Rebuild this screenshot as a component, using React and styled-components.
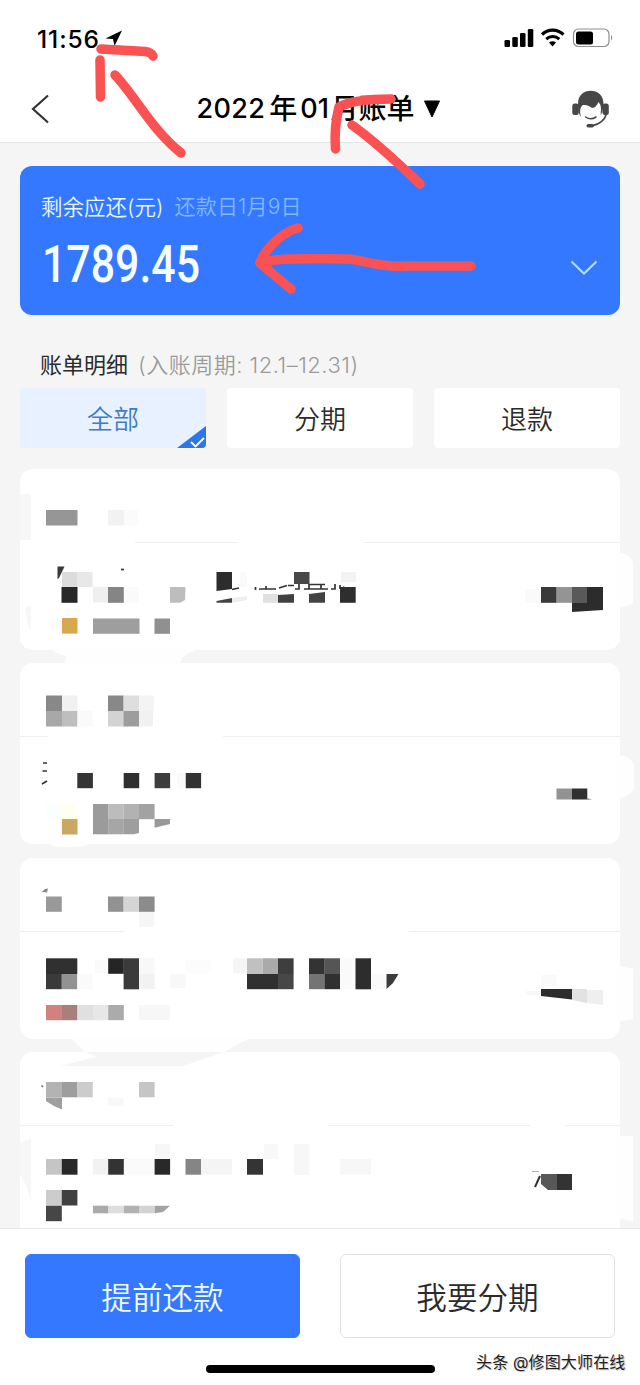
import React from "react";
import styled, { createGlobalStyle } from "styled-components";

const GlobalStyle = createGlobalStyle`
  * {
    box-sizing: border-box;
  }

  body {
    margin: 0;
    background: #f5f5f5;
    font-family: Inter, "Noto Sans CJK SC", sans-serif;
    color: #2b2b2b;
  }
`;

const Page = styled.div`
  position: relative;
  width: 640px;
  height: 1385px;
  overflow: hidden;
  display: flex;
  flex-direction: column;
  background: #f5f5f5;
`;

const Header = styled.header`
  flex: none;
  height: 143px;
  background: #fff;
  border-bottom: 1px solid #e4e4e4;
`;

const StatusBar = styled.div`
  display: flex;
  align-items: center;
  height: 76px;
  padding: 0 27px 0 37px;
`;

const Time = styled.span`
  font-size: 24.5px;
  font-weight: 500;
  letter-spacing: 0.9px;
  color: #000;
  margin: 1px 5px 0 0;
`;

const StatusIcons = styled.div`
  display: flex;
  align-items: center;
  margin-left: auto;
`;

const NavBar = styled.div`
  display: flex;
  align-items: center;
  justify-content: space-between;
  height: 66px;
  padding: 0 31px 0 30px;
`;

const Title = styled.h1`
  display: flex;
  align-items: center;
  margin: 0 0 0 17px;
  font-size: 28px;
  line-height: 36px;
  font-weight: 500;
  color: #000;
  white-space: pre;
`;

const TitleNumber = styled.span`
  font-size: 27px;
  letter-spacing: 0.3px;
  margin: ${props => props.$margin || "0"};
`;

const TitleArrow = styled.svg`
  margin-left: 9px;
`;

const Summary = styled.section`
  flex: none;
  display: flex;
  justify-content: space-between;
  height: 149px;
  margin: 23px 20px 0;
  padding: 24px 22px 0 21px;
  border-radius: 12px;
  background: #3478ff;
`;

const SummaryLabel = styled.div`
  display: flex;
  font-size: 21.5px;
  line-height: 34px;
  font-weight: 350;
  color: #e9f8ff;
`;

const DueDate = styled.span`
  margin-left: 11px;
  font-size: 21px;
  letter-spacing: 0.2px;
  color: #83b9ff;
`;

const Amount = styled.div`
  margin: 11px 0 0 1px;
  font-family: Roboto, sans-serif;
  font-size: 51px;
  line-height: 60px;
  font-weight: 500;
  color: #f4fdff;
  transform: scaleX(0.84);
  transform-origin: left;
`;

const SummaryChevron = styled.svg`
  margin-top: 70px;
`;

const SectionTitle = styled.div`
  flex: none;
  display: flex;
  align-items: center;
  height: 72px;
  padding: 27px 0 0 40px;
  font-size: 22px;
  line-height: 44px;
`;

const Period = styled.span`
  margin-left: 10px;
  font-size: 22px;
  font-weight: 350;
  letter-spacing: 0.5px;
  color: #9b9b9b;
  white-space: pre;
`;

const Tabs = styled.div`
  flex: none;
  display: grid;
  grid-template-columns: repeat(3, 186px);
  justify-content: space-between;
  margin: 1px 20px 0;
`;

const Tab = styled.button`
  position: relative;
  height: 60px;
  padding: 0 0 2px;
  border: 0;
  border-radius: 4px;
  background: ${props => (props.$active ? "#e7f1ff" : "#fff")};
  color: ${props => (props.$active ? "#3f7cc4" : "#2b2b2b")};
  font-family: inherit;
  font-size: 26px;
  font-weight: 350;
`;

const TabCheck = styled.svg`
  position: absolute;
  right: 0;
  bottom: 0;
`;

const BillList = styled.main`
  position: relative;
  flex: none;
  display: flex;
  flex-direction: column;
  gap: 13.4px;
  height: 780px;
  padding: 21px 20px 0;
  overflow: hidden;
`;

const BillCard = styled.article`
  flex: none;
  height: 181px;
  border-radius: 13px;
  background: #fff;

  &:nth-child(4) {
    height: 200px;
  }
`;

const BillHead = styled.div`
  height: 74px;
  border-bottom: 1px solid #f0f0f0;
`;

const Mosaic = styled.svg`
  position: absolute;
  left: 0;
  top: 0;
`;

const Footer = styled.footer`
  flex: none;
  height: 157px;
  padding: 25px 25px 0;
  background: #fff;
  border-top: 1px solid #e6e6e6;
`;

const Actions = styled.div`
  display: flex;
  justify-content: space-between;
`;

const ActionButton = styled.button`
  width: 275px;
  height: 84px;
  padding: 0;
  border: 1px solid ${props => (props.$primary ? "#3478ff" : "#e2e2e2")};
  border-radius: 6px;
  background: ${props => (props.$primary ? "#3478ff" : "#fff")};
  color: ${props => (props.$primary ? "#effcff" : "#2b2b2b")};
  font-family: inherit;
  font-size: 30.6px;
  font-weight: 350;
`;

const BottomLine = styled.div`
  display: flex;
  align-items: center;
  height: 46px;
  padding-left: 181px;
`;

const HomeIndicator = styled.div`
  flex: none;
  width: 229px;
  height: 8px;
  margin-top: 15px;
  border-radius: 4px;
  background: #000;
`;

const Credit = styled.span`
  flex: none;
  margin: 2px 0 0 41px;
  font-size: 16px;
  line-height: 24px;
  letter-spacing: 0.15px;
  color: #222;
  white-space: nowrap;
  text-shadow: 1px 1px 0 #ccc;
`;

const Doodle = styled.svg`
  position: absolute;
  left: 0;
  top: 0;
  pointer-events: none;
`;

// [x, y, width, height, colour]
const blocks = [
  [46, 510, 31.5, 15.5, "#969696"],
  [108, 510, 16, 15.5, "#f2f2f2"],
  [124, 510, 14, 15.5, "#fbfbfb"],
  [62, 572, 15.5, 15, "#dcdcdc"],
  [77, 572, 15.5, 15, "#e8e8e8"],
  [61.5, 587, 16, 15.8, "#282828"],
  [93, 587, 15.5, 15.5, "#efefef"],
  [108, 587, 15.8, 15.8, "#858585"],
  [124, 587, 15, 15.5, "#fafafa"],
  [240, 572, 7, 15, "#fafafa"],
  [263, 594, 15.5, 8.8, "#e0e0e0"],
  [294, 572, 15.5, 12, "#484848"],
  [341, 572, 15, 10, "#f3f3f3"],
  [340, 587, 15.7, 15.8, "#2e2e2e"],
  [62, 618, 15.5, 15.6, "#d7a84e"],
  [93, 618.5, 46.5, 15.3, "#9e9e9e"],
  [154.5, 618.5, 15.5, 15.3, "#909090"],
  [525, 589, 16, 14, "#fafafa"],
  [541, 587, 15.7, 15.8, "#3a3a3a"],
  [556.5, 587, 15.5, 15.8, "#949494"],
  [46, 695.5, 16, 15.5, "#888"],
  [62, 695.5, 15.5, 15.5, "#f1f1f1"],
  [46, 711, 16, 15.5, "#a8a8a8"],
  [62, 711, 15.5, 15.5, "#bebebe"],
  [77.5, 711, 15, 15.5, "#fafafa"],
  [108, 695.5, 15.7, 15.5, "#888"],
  [123.5, 695.5, 15.5, 15.5, "#dedede"],
  [139, 695.5, 15, 15.5, "#f4f4f4"],
  [108, 711, 15.7, 15.5, "#d3d3d3"],
  [123.5, 711, 15.5, 15.5, "#9d9d9d"],
  [139, 711, 14, 15.5, "#f1f1f1"],
  [77.3, 773, 15.6, 15.2, "#343434"],
  [123.7, 773, 15.5, 15.2, "#303030"],
  [154.6, 773, 15.5, 15.2, "#3d3d3d"],
  [185.5, 773, 15.6, 15.2, "#323232"],
  [177, 773, 8.5, 15.2, "#fafafa"],
  [46, 804, 15.5, 15, "#f8fffc"],
  [62, 804, 15.5, 15, "#fffff0"],
  [62, 819, 15.5, 15.5, "#cba861"],
  [93, 804, 15.5, 30.3, "#9b9b9b"],
  [108.3, 804, 15.5, 15, "#bcbcbc"],
  [123.8, 804, 15.3, 15, "#b2b2b2"],
  [139, 804, 15.6, 15.2, "#a2a2a2"],
  [108.3, 819, 15.5, 15.3, "#a6a6a6"],
  [556.5, 788.5, 15.5, 11, "#929292"],
  [572, 788.5, 15.3, 11, "#303030"],
  [46, 896.5, 15.8, 15.3, "#999"],
  [108, 896.5, 15.7, 15.3, "#929292"],
  [123.5, 896.5, 15.5, 15.3, "#d5d5d5"],
  [139, 896.5, 15.6, 15.3, "#8b8b8b"],
  [139, 912, 15, 15, "#f6f6f6"],
  [46, 958.3, 31.3, 15.7, "#303030"],
  [46, 974, 15.8, 15.2, "#3a3a3a"],
  [61.8, 974, 15.5, 15.2, "#929292"],
  [77.5, 974, 15, 15, "#fafafa"],
  [95, 960, 13, 13, "#fafafa"],
  [108.2, 958.3, 15.6, 15.5, "#252525"],
  [123.6, 958.3, 15.5, 31, "#3b3b3b"],
  [139, 958.3, 15.5, 15.7, "#f8f8f8"],
  [139, 974, 15.5, 15, "#f2f2f2"],
  [170, 974, 15.5, 14, "#f8f8f8"],
  [185, 960, 25, 13, "#fcfcfc"],
  [233, 958.3, 14, 15, "#f5f5f5"],
  [247, 958.3, 15.7, 15.7, "#c0c0c0"],
  [262.7, 958.3, 15.5, 15.7, "#aaa"],
  [278, 958.3, 15.6, 15.7, "#3e3e3e"],
  [247, 974, 31, 15.2, "#303030"],
  [278, 974, 15.6, 15.2, "#474747"],
  [309, 958.3, 15.7, 15.7, "#333"],
  [324.5, 958.3, 15.5, 15.7, "#555"],
  [309, 974, 15.6, 15.2, "#747474"],
  [324.5, 974, 15.5, 15.2, "#303030"],
  [340, 958.3, 15, 31, "#fafafa"],
  [355.5, 958.3, 15.5, 31, "#2d2d2d"],
  [371, 974, 14, 15, "#fafafa"],
  [46, 1005, 16, 15.2, "#d1827d"],
  [62, 1005, 15.5, 15.2, "#a97f7c"],
  [77.5, 1005, 15.5, 15.2, "#e0e0e0"],
  [93, 1005, 15.2, 15.2, "#e7e7e7"],
  [108.2, 1005, 15.6, 15.2, "#ababab"],
  [139, 1005, 31, 15.2, "#f7f7f7"],
  [541, 975, 15.5, 12, "#fafafa"],
  [526, 991, 15, 4, "#f7f7f7"],
  [46, 1082, 16, 15.3, "#b3b3b3"],
  [62, 1082, 15.5, 15.3, "#9e9e9e"],
  [77.5, 1082, 15.3, 15.3, "#ccc"],
  [139, 1082, 15.6, 15.3, "#c5c5c5"],
  [108, 1098, 15.5, 8, "#f8f8f8"],
  [155, 1144, 15, 15, "#f7f7f7"],
  [46, 1159, 16, 15.7, "#c5c5c5"],
  [61.8, 1159, 15.7, 15.7, "#282828"],
  [93, 1159, 15.2, 15.5, "#f2f2f2"],
  [108.2, 1159, 15.6, 15.7, "#333"],
  [124, 1159, 30, 15.5, "#fafafa"],
  [154.6, 1159, 15.5, 15.7, "#292929"],
  [185.5, 1159, 15.6, 15.7, "#858585"],
  [201, 1159, 31, 15.5, "#f4f4f4"],
  [247, 1159, 16, 15.7, "#343434"],
  [264, 1144, 14, 15, "#f8f8f8"],
  [294, 1144, 15.5, 31, "#f7f7f7"],
  [340, 1159, 31, 15.5, "#f7f7f7"],
  [46, 1190, 16, 15.5, "#ccc"],
  [61.8, 1190, 15.6, 15.5, "#404040"],
  [46, 1205.7, 15.8, 15.5, "#464646"],
  [93, 1205.7, 15.5, 7.6, "#aaa"],
  [108.3, 1205.7, 15.5, 7.6, "#dedede"],
  [123.8, 1205.7, 15.2, 7.6, "#b2b2b2"],
  [139, 1205.7, 15.7, 7.6, "#d3d3d3"],
  [556, 1174, 16, 16, "#333"],
];

// [points, colour]
const shards = [
  ["57.5,566.5 64.5,566.5 59,578 57.5,579", "#3a3a3a"],
  ["170,587 185.5,587 185,600 180,602.7 170,602.7", "#bdbdbd"],
  ["216.5,572 232,572 232,589 216.5,591", "#2d2d2d"],
  ["216.5,601 232,598 232,602.8 216.5,602.8", "#444"],
  ["232,598 247,596 247,600 232,602.8", "#eee"],
  ["278,595 294,594 294,602.8 278,602.8", "#404040"],
  ["309,594 325,592 325,602.8 309,602.8", "#424242"],
  ["572,587 603,587 603,610 572,612", "#2c2c2c"],
  ["572,587 587,587 587,603 572,603", "#595959"],
  ["123.8,819 139,819 139,833 134,834.3 123.8,834.3", "#9e9e9e"],
  ["154.6,819 170,819 170,824 154.6,827.7", "#999"],
  ["587,798 592,799.5 587,800", "#999"],
  ["41,892.5 45,889 48,888.5 47,892.5 43,892", "#8a8a8a"],
  ["386.5,974 398.5,974 393,983 386.5,989", "#3c3c3c"],
  ["541,989 572,989 572,999.5 541,996", "#2c2c2c"],
  ["572,989 587,989 587,1003 572,1000", "#e2e2e2"],
  ["587,990 603,990 603,1005 587,1003", "#efefef"],
  ["46,1097.5 62,1097.5 62,1109.5 54,1106 46,1101", "#9f9f9f"],
  ["154.7,1205.7 170,1205.7 163,1212 154.7,1213.3", "#a3a3a3"],
  ["541,1174 557,1174 557,1190 548,1190 541,1184", "#585858"],
];

// light strokes left where the rub-out ran past the card edges
const smears = [
  "M617 552 Q629 553 633 562 L633 603 Q629 606 617 608Z",
  "M617 755 Q630 755 634 765 V788 Q632 796 617 799Z",
  "M617 965 L633 969 V1019 L617 1022Z",
  "M617 1136 H633 V1222 L617 1217Z",
  "M52 649 H200 Q180 654 180 665 H65 L66 656 Q58 655 52 649Z",
  "M48 842 H98 Q76 850 52 846Z",
  "M70 1037 H252 L224 1052 H85Z",
];

const eraseRects = [
  [20, 540, 115, 5], [238, 540, 125, 5],
  [48, 733, 175, 5], [125, 928, 284, 5],
  [174, 1122, 154, 5], [530, 1122, 35, 5],
];

const strokes = [
  "M101 49 L145 51.500 Q151 52 153 56",
  "M100 60 L100.500 97",
  "M115 75 C135 96 152 130 181 153",
  "M335.500 149 C334 130 337 115 339 107 C350 101 369 99 391 99",
  "M352 125 C373 140 395 160 420 184",
  "M298 228 C279 233 263 253 260 263 C272 273 282 282 291 289",
  "M260 263 C278 257 315 259 350 259 C373 263 385 267 405 266 H471",
];

function Headset() {
  return (
    <svg width="38" height="38" viewBox="0 0 38 38">
      <path d="M7 14 C7 5 13 0.800 19.700 0.800 S32.500 5 32.500 14 C32.500 19 31 23 29.500 25 C30.500 18 30 15 27.500 12 C26 15 24 18 21 18 C18 15.500 15 15 12 15 C9 17 8.500 21 10 27 C7.500 24 7 19 7 14Z" fill="#474747" />
      <rect x="1.300" y="13.500" width="6.500" height="11.500" rx="2.500" fill="#474747" />
      <rect x="31.500" y="13.500" width="6.300" height="11.500" rx="2.500" fill="#474747" />
      <path d="M14.500 27 Q19.700 30.500 25 27" stroke="#474747" strokeWidth="1.500" fill="none" strokeLinecap="round" />
      <path d="M35.500 24 Q32.500 33.500 21 35.800" stroke="#474747" strokeWidth="1.700" fill="none" />
      <rect x="15.500" y="34" width="7.500" height="3.600" rx="1.800" fill="#474747" />
    </svg>
  );
}

function StatusSignals() {
  return (
    <StatusIcons>
      <svg width="109" height="20" viewBox="0 0 109 20">
        <g fill="#000">
          <rect x="0.500" y="12" width="5.500" height="7" rx="1.300" />
          <rect x="8.300" y="9" width="5.500" height="10" rx="1.300" />
          <rect x="16" y="5" width="5.500" height="14" rx="1.300" />
          <rect x="23.800" y="1" width="5.500" height="18" rx="1.300" />
          <path d="M45 14.500 Q48.500 12 52 14.500 L48.500 18.500Z" />
        </g>
        <path d="M38 6.500 C44 0.700 53 0.700 59.500 6.500" fill="none" stroke="#000" strokeWidth="3.200" />
        <path d="M42.200 11.200 C46 7.700 51.500 7.700 55.300 11.200" fill="none" stroke="#000" strokeWidth="3" />
        <rect x="69.500" y="1" width="35.500" height="17.500" rx="5" fill="none" stroke="#8f8f8f" strokeWidth="1.200" />
        <rect x="72" y="3.500" width="17" height="13" rx="2.500" fill="#000" />
        <path d="M107 7 Q109.500 9.700 107 12.500Z" fill="#8f8f8f" />
      </svg>
    </StatusIcons>
  );
}

export default function App() {
  return (
    <Page>
      <GlobalStyle />
      <Header>
        <StatusBar>
          <Time>11:56</Time>
          <svg width="18" height="17" viewBox="0 0 18 17">
            <path d="M17 0.500 L0.500 8.500 L8 9 L9.500 16Z" fill="#000" />
          </svg>
          <StatusSignals />
        </StatusBar>
        <NavBar>
          <svg width="20" height="30" viewBox="0 0 20 30">
            <path d="M18 1.500 L3 15 L18 28.500" fill="none" stroke="#333" strokeWidth="2.200" />
          </svg>
          <Title>
            <TitleNumber $margin="0 4px 0 0">2022</TitleNumber>
            年
            <TitleNumber $margin="0 1px 0 3px">01</TitleNumber>
            月账单
            <TitleArrow width="18" height="18" viewBox="0 0 18 18">
              <path d="M1.500 1 H16.500 L9 17Z" fill="#000" stroke="#000" strokeLinejoin="round" />
            </TitleArrow>
          </Title>
          <Headset />
        </NavBar>
      </Header>

      <Summary>
        <div>
          <SummaryLabel>
            剩余应还(元)
            <DueDate>还款日1月9日</DueDate>
          </SummaryLabel>
          <Amount>1789.45</Amount>
        </div>
        <SummaryChevron width="28" height="16" viewBox="0 0 28 16">
          <path d="M1.500 1.500 L14 13.500 L26.500 1.500" fill="none" stroke="#b5deff" strokeWidth="2" />
        </SummaryChevron>
      </Summary>

      <SectionTitle>
        账单明细
        <Period>(入账周期: 12.1–12.31)</Period>
      </SectionTitle>

      <Tabs>
        <Tab $active>
          全部
          <TabCheck width="30" height="22" viewBox="0 0 30 22">
            <path d="M30 0 V18 Q30 22 26 22 H1Z" fill="#2e75e6" />
            <path d="M15 16 L19.500 20.500 L28 12" fill="none" stroke="#fff" strokeWidth="1.800" />
          </TabCheck>
        </Tab>
        <Tab>分期</Tab>
        <Tab>退款</Tab>
      </Tabs>

      <BillList>
        {[0, 1, 2, 3].map(i => (
          <BillCard key={i}>
            <BillHead />
          </BillCard>
        ))}
        <Mosaic width="640" height="780" viewBox="0 448 640 780">
          {smears.map(d => <path key={d} d={d} fill="#fefefe" />)}
          <path d="M86 1052 H224 L183 1066 H60 L96 1057Z" fill="#f5f5f5" />
          <path d="M20 494 H31 V544 H20Z M25 608 L31 605 V630 L28 627Z M20 1142 L31 1139 V1202 L26 1185 L20 1175Z" fill="#f7f7f7" />
          {eraseRects.map(([x, y, w, h]) => (
            <rect key={x + "-" + y} x={x} y={y} width={w} height={h} fill="#fff" />
          ))}
          {blocks.map(([x, y, w, h, fill]) => (
            <rect key={x + "-" + y} x={x} y={y} width={w} height={h} fill={fill} />
          ))}
          {shards.map(([points, fill]) => (
            <polygon key={points} points={points} fill={fill} />
          ))}
          <g fill="none" stroke="#333" strokeWidth="1.700">
            <path d="M121 569.500 H124" />
            <path d="M232 589.500 L239 588 M255.500 587 V590 M259 589 H276 M266 586 V589 M279 588 L287 585.500 M288 585.500 H294 M295 589 H299 V584 M304 589 H325 M309 584.500 H325 M309 584 V589" />
            <path d="M321 584 V589 M325 589 H328 M331 589 H335 V584 M340 585 V589 M343 587 L347 589" />
            <path d="M43 763 H47 M42.500 771 H47 M42 784 L47 781" />
            <path d="M41.500 1085.500 L43 1087" stroke="#777" />
            <path d="M535 1187 L540 1176" strokeWidth="2" />
            <path d="M532 1171.500 H539" stroke="#aaa" strokeWidth="1" />
          </g>
        </Mosaic>
      </BillList>

      <Footer>
        <Actions>
          <ActionButton $primary>提前还款</ActionButton>
          <ActionButton>我要分期</ActionButton>
        </Actions>
        <BottomLine>
          <HomeIndicator />
          <Credit>头条 @修图大师在线</Credit>
        </BottomLine>
      </Footer>

      <Doodle width="640" height="310" viewBox="0 0 640 310">
        <g fill="none" stroke="#fa5153" strokeWidth="9.500" strokeLinecap="round" strokeLinejoin="round">
          {strokes.map(d => <path key={d} d={d} />)}
        </g>
      </Doodle>
    </Page>
  );
}
